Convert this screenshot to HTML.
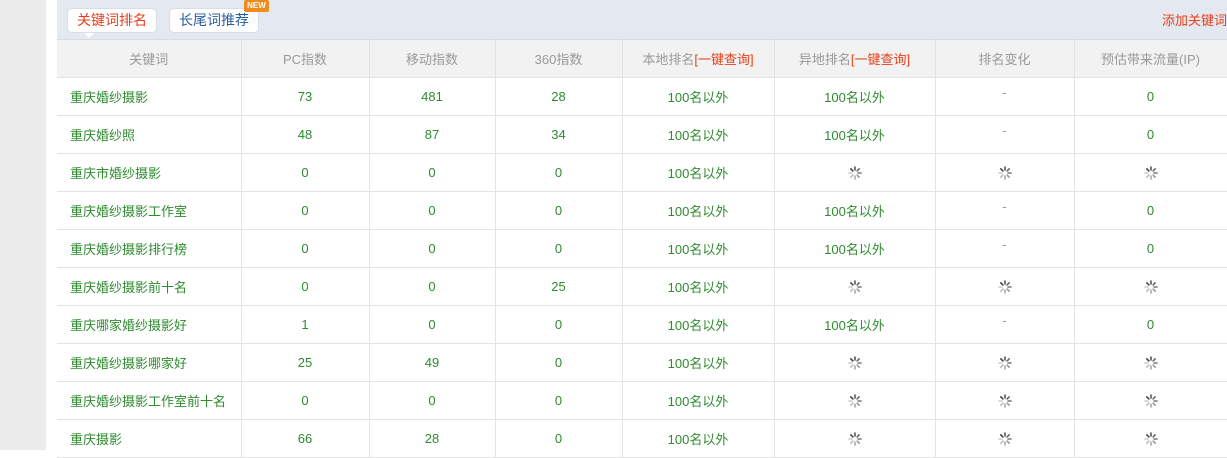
<!DOCTYPE html>
<html><head><meta charset="utf-8"><style>
*{margin:0;padding:0;box-sizing:border-box}
body{width:1227px;height:450px;overflow:hidden;background:#fff;font-family:"Liberation Sans","Noto Sans CJK SC",sans-serif;font-size:13px;position:relative}
.side{position:absolute;left:0;top:0;width:46px;height:450px;background:#ececec}
.panel{position:absolute;left:57px;top:0;width:1170px;height:450px;background:#fff}
.bar{height:39px;background:#e4e8f0;position:relative}
.tab{position:absolute;top:8px;height:25px;width:90px;background:#fff;border:1px solid #d9dde6;border-radius:5px;text-align:center;line-height:23px;font-size:14px}
.t1{left:10px;color:#e8401c}
.t1:after{content:"";position:absolute;left:16px;bottom:-6px;border:5px solid transparent;border-top-color:#fff;border-bottom:0}
.t2{left:112px;color:#2a5d9f}
.new{position:absolute;left:187px;top:0;width:25px;height:12px;background:#f08a1c;color:#fff;font-size:8px;line-height:12px;text-align:center;border-radius:2px;font-weight:bold}
.add{position:absolute;right:0;top:10px;color:#e8401c;font-size:13px}
table{border-collapse:collapse;table-layout:fixed;width:1170px}
td,th{height:38px;border:1px solid #e3e3e3;text-align:center;color:#2e8b2e;font-weight:normal}
th{background:#f2f2f2;color:#999;height:38px;border-top-color:#d6dbe4}
th span{color:#e8401c}
td.k{text-align:left;padding-left:13px}
tr td:first-child,tr th:first-child{border-left:0}
.dash{color:#999;position:relative;top:-4px}
.sp{display:inline-block;width:14px;height:14px;vertical-align:middle}
</style></head><body>
<div class="side"></div>
<div class="panel">
<div class="bar"><div class="tab t1">关键词排名</div><div class="tab t2">长尾词推荐</div><div class="new">NEW</div><div class="add">添加关键词</div></div>
<div id="rows"></div>
</div>
<svg width="0" height="0" style="position:absolute"><defs><g id="s"><g stroke-width="1.6" stroke-linecap="round">
<line x1="7" y1="1" x2="7" y2="4" stroke="#555"/><line x1="11.2" y1="2.8" x2="9.1" y2="4.9" stroke="#666"/><line x1="13" y1="7" x2="10" y2="7" stroke="#777"/><line x1="11.2" y1="11.2" x2="9.1" y2="9.1" stroke="#999"/><line x1="7" y1="13" x2="7" y2="10" stroke="#aaa"/><line x1="2.8" y1="11.2" x2="4.9" y2="9.1" stroke="#bbb"/><line x1="1" y1="7" x2="4" y2="7" stroke="#ccc"/><line x1="2.8" y1="2.8" x2="4.9" y2="4.9" stroke="#444"/></g></g></defs></svg>
<script>
var S='<svg class="sp" viewBox="0 0 14 14"><use href="#s"/></svg>';
var d=[["重庆婚纱摄影",73,481,28,1],["重庆婚纱照",48,87,34,1],["重庆市婚纱摄影",0,0,0,0],["重庆婚纱摄影工作室",0,0,0,1],["重庆婚纱摄影排行榜",0,0,0,1],["重庆婚纱摄影前十名",0,0,25,0],["重庆哪家婚纱摄影好",1,0,0,1],["重庆婚纱摄影哪家好",25,49,0,0],["重庆婚纱摄影工作室前十名",0,0,0,0],["重庆摄影",66,28,0,0]];
var h='<table><colgroup><col style="width:184px"><col style="width:128px"><col style="width:126px"><col style="width:127px"><col style="width:152px"><col style="width:161px"><col style="width:139px"><col style="width:153px"></colgroup>';
h+='<tr><th>关键词</th><th>PC指数</th><th>移动指数</th><th>360指数</th><th>本地排名<span>[一键查询]</span></th><th>异地排名<span>[一键查询]</span></th><th>排名变化</th><th>预估带来流量(IP)</th></tr>';
d.forEach(function(r){h+='<tr><td class="k">'+r[0]+'</td><td>'+r[1]+'</td><td>'+r[2]+'</td><td>'+r[3]+'</td><td>100名以外</td>'+(r[4]?'<td>100名以外</td><td><span class="dash">-</span></td><td>0</td>':'<td>'+S+'</td><td>'+S+'</td><td>'+S+'</td>')+'</tr>'});
document.getElementById('rows').innerHTML=h+'</table>';
</script>
</body></html>
